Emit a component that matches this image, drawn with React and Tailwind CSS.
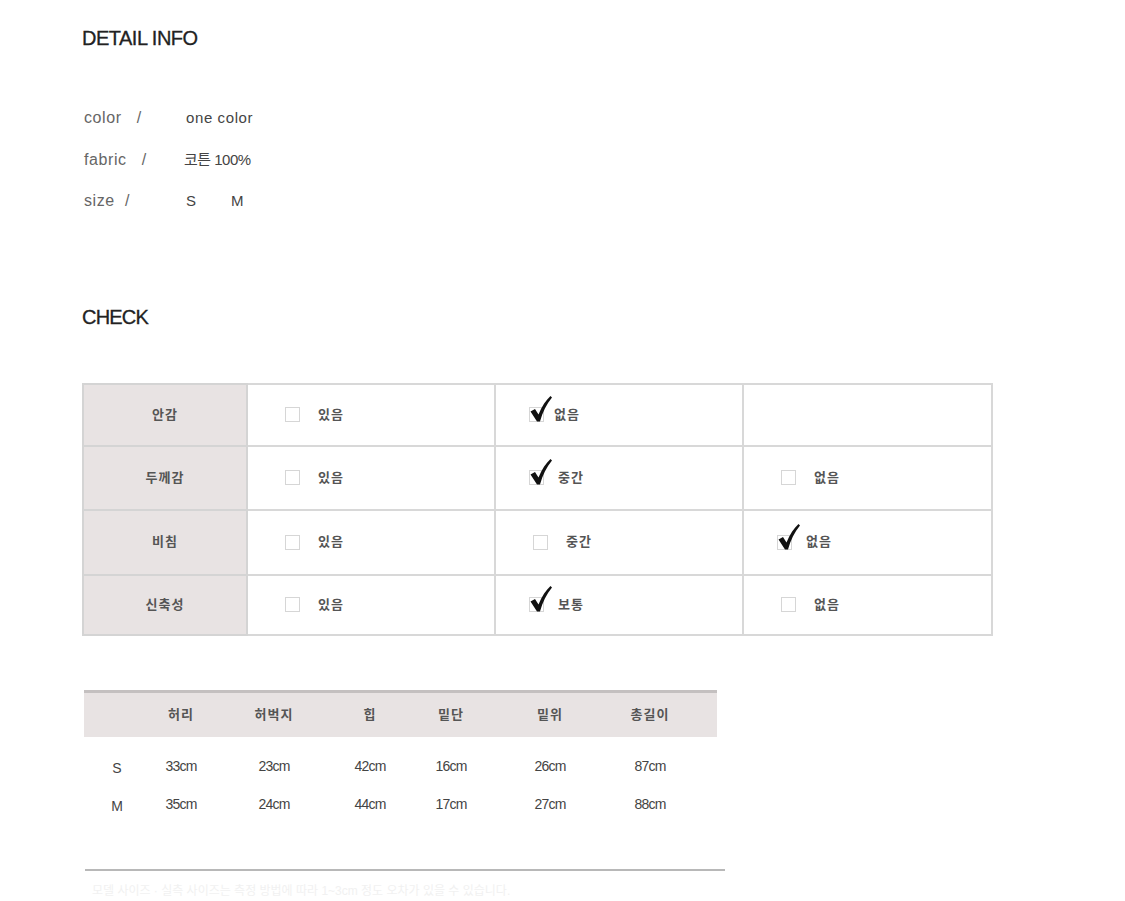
import React from 'react'

const font = { fontFamily: '"Liberation Sans", "Noto Sans CJK KR", sans-serif' }

const checkRows = [
  { label: '안감', h: 'h-[62px]', cells: [['있음', false], ['없음', true, 'gap-[10px]'], null] },
  { label: '두께감', h: 'h-[64px]', cells: [['있음', false], ['중간', true], ['없음', false]] },
  { label: '비침', h: 'h-[65px]', cells: [['있음', false], ['중간', false], ['없음', true]] },
  { label: '신축성', h: 'h-[60px]', cells: [['있음', false], ['보통', true], ['없음', false]] },
]

const sizeCols = ['w-[66px]', 'w-[62px]', 'w-[124px]', 'w-[68px]', 'w-[94px]', 'w-[104px]', 'w-[96px]']
const sizeHead = ['', '허리', '허벅지', '힙', '밑단', '밑위', '총길이']
const sizeRows = [
  ['S', '33cm', '23cm', '42cm', '16cm', '26cm', '87cm'],
  ['M', '35cm', '24cm', '44cm', '17cm', '27cm', '88cm'],
]

function Check() {
  return (
    <svg viewBox="0 0 22 26" className="absolute left-0 -top-[12px] w-[22px] h-[26px]">
      <path d="M0.5 15.5 L5 13 L8.5 18.5 C12 10 16 4 20.5 0 L22 1.5 C16.5 8 12.5 16 10 25.5 L7 25.5 Z" fill="#111" />
    </svg>
  )
}

function Option({ text, checked, gap }) {
  return (
    <div className={`flex items-center h-full ${checked ? `pl-[33px] ${gap ?? 'gap-[14px]'}` : 'pl-[37px] gap-[18px]'}`}>
      <span className="relative block w-[15px] h-[15px] border border-[#d6d6d6] shrink-0">
        {checked && <Check />}
      </span>
      <span className="text-[13px] font-semibold text-[#555] tracking-[1px]">{text}</span>
    </div>
  )
}

export default function App() {
  return (
    <div className="min-h-[901px] bg-white pl-[82px] overflow-hidden" style={font}>
      {/* Detail info */}
      <h2 className="pt-[26px] text-[20px] leading-[24px] text-[#222] tracking-[-0.5px] [-webkit-text-stroke:0.3px_#222]">DETAIL INFO</h2>

      <div className="mt-[47px] text-[16px] leading-[42px] text-[#666] tracking-[0.6px]">
        <div className="flex">
          <span className="w-[104px] pl-[2px]">color&nbsp;&nbsp;&nbsp;/</span>
          <span className="text-[15px] text-[#444]">one color</span>
        </div>
        <div className="flex -mt-[0.5px]">
          <span className="w-[102px] pl-[2px]">fabric&nbsp;&nbsp;&nbsp;/</span>
          <span className="text-[15px] text-[#444] tracking-[-0.5px]">코튼 100%</span>
        </div>
        <div className="flex -mt-[1px]">
          <span className="w-[104px] pl-[2px]">size&nbsp;&nbsp;/</span>
          <span className="text-[15px] text-[#444] w-[45px]">S</span>
          <span className="text-[15px] text-[#444]">M</span>
        </div>
      </div>

      {/* Check */}
      <h2 className="mt-[83px] text-[20px] leading-[24px] text-[#222] tracking-[-0.8px] [-webkit-text-stroke:0.3px_#222]">CHECK</h2>

      <table className="mt-[54px] border-collapse border-2 border-[#d8d8d8]">
        <tbody>
          {checkRows.map(row => (
            <tr key={row.label} className={row.h}>
              <td className="w-[164px] p-0 bg-[#e8e3e3] border-2 border-[#d4d4d4] text-center text-[13px] font-semibold text-[#555] tracking-[1px]">
                {row.label}
              </td>
              {row.cells.map((c, i) => (
                <td key={i} className={`${i === 2 ? 'w-[249px]' : 'w-[248px]'} p-0 border-2 border-[#d8d8d8]`}>
                  {c && <Option text={c[0]} checked={c[1]} gap={c[2]} />}
                </td>
              ))}
            </tr>
          ))}
        </tbody>
      </table>

      {/* Size table */}
      <div className="mt-[54px] ml-[2px] w-[633px]">
        <div className="flex h-[47px] items-center bg-[#e8e3e3] border-t-[3px] border-[#c4c0c0] text-[13px] font-semibold text-[#555] tracking-[1px]">
          {sizeHead.map((t, i) => (
            <span key={i} className={`${sizeCols[i]} text-center`}>{t}</span>
          ))}
        </div>
        <div className="mt-[11px] text-[14px] text-[#444] tracking-[-0.8px]">
          {sizeRows.map(r => (
            <div key={r[0]} className="flex h-[38px] items-center">
              {r.map((t, i) => (
                <span key={i} className={`${sizeCols[i]} text-center ${i === 0 ? 'tracking-normal pt-[3px]' : ''}`}>{t}</span>
              ))}
            </div>
          ))}
        </div>
      </div>

      <div className="mt-[45px] ml-[3px] w-[640px] h-[2px] bg-[#b8b8b8]" />
      <p className="mt-[12px] ml-[10px] text-[12px] leading-[16px] text-[#f1f1f1] whitespace-nowrap">
        모델 사이즈 · 실측 사이즈는 측정 방법에 따라 1~3cm 정도 오차가 있을 수 있습니다.
      </p>
    </div>
  )
}
